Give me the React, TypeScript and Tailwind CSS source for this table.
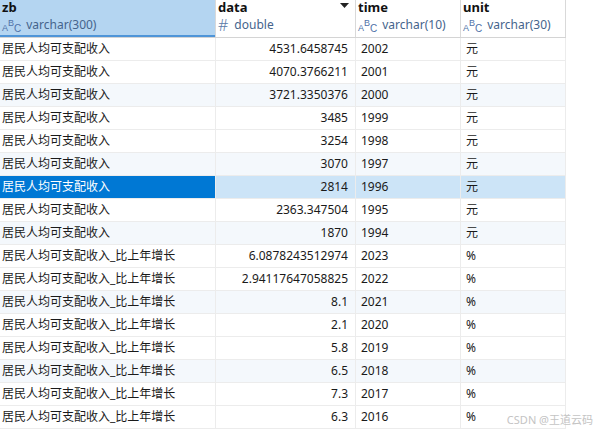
import { Fragment } from "react"

const rows: [string, string, string, string][] = [
  ["居民人均可支配收入", "4531.6458745", "2002", "元"],
  ["居民人均可支配收入", "4070.3766211", "2001", "元"],
  ["居民人均可支配收入", "3721.3350376", "2000", "元"],
  ["居民人均可支配收入", "3485", "1999", "元"],
  ["居民人均可支配收入", "3254", "1998", "元"],
  ["居民人均可支配收入", "3070", "1997", "元"],
  ["居民人均可支配收入", "2814", "1996", "元"],
  ["居民人均可支配收入", "2363.347504", "1995", "元"],
  ["居民人均可支配收入", "1870", "1994", "元"],
  ["居民人均可支配收入_比上年增长", "6.0878243512974", "2023", "%"],
  ["居民人均可支配收入_比上年增长", "2.94117647058825", "2022", "%"],
  ["居民人均可支配收入_比上年增长", "8.1", "2021", "%"],
  ["居民人均可支配收入_比上年增长", "2.1", "2020", "%"],
  ["居民人均可支配收入_比上年增长", "5.8", "2019", "%"],
  ["居民人均可支配收入_比上年增长", "6.5", "2018", "%"],
  ["居民人均可支配收入_比上年增长", "7.3", "2017", "%"],
  ["居民人均可支配收入_比上年增长", "6.3", "2016", "%"],
]

const font = { fontFamily: '"Noto Sans", "Noto Sans CJK SC", sans-serif' }

function AbcIcon() {
  return (
    <span className="inline-flex items-end mr-[5px] h-[14px] text-[#4f72a8] leading-none" style={{ fontFamily: '"Liberation Sans", sans-serif' }}>
      <span className="text-[9px] translate-y-[1px]">A</span>
      <span className="text-[9px] -translate-y-[4px]">B</span>
      <span className="text-[10px] translate-y-[2px]">C</span>
    </span>
  )
}

function Header({ name, type, icon, active, sort }: { name: string; type: string; icon: "abc" | "num"; active?: boolean; sort?: boolean }) {
  return (
    <div className={`relative h-[37px] border-r border-[#d9d9d9] ${active ? "bg-[#b4d5f1]" : "bg-white"}`}>
      <div className="px-[2px] text-[13px] font-bold text-[#111] leading-[15px]">{name}</div>
      <div className="flex items-center px-[2px] mt-[2px] h-[16px] text-[12px] text-[#45648c] leading-[16px]">
        {icon === "abc" ? <AbcIcon /> : <span className="mr-[6px] h-[14px] text-[16px] font-light leading-[14px] text-[#5a7ba8]">#</span>}
        <span>{type}</span>
      </div>
      {sort && (
        <svg className="absolute right-[6px] top-[3px]" width="9" height="6" viewBox="0 0 9 6">
          <path d="M0 0h9L4.5 5z" fill="#222" />
        </svg>
      )}
      {active && <div className="absolute left-0 right-0 bottom-0 h-[2px] bg-[#4f95d8]" />}
    </div>
  )
}

export default function App() {
  return (
    <div className="relative w-[596px] h-[430px] bg-white overflow-hidden" style={font}>
      <div className="grid grid-cols-[216px_140px_105px_105px] w-[566px]">
        <Header name="zb" type="varchar(300)" icon="abc" active />
        <Header name="data" type="double" icon="num" sort />
        <Header name="time" type="varchar(10)" icon="abc" />
        <Header name="unit" type="varchar(30)" icon="abc" />
        <div className="col-span-4 h-px bg-[#d4d4d4]" />
        {rows.map((r, i) => {
          const selected = i === 6
          const striped = (i + 1) % 3 === 0
          const bg = selected ? "bg-[#cce4f7]" : striped ? "bg-[#f4f8fc]" : "bg-white"
          const cell = `h-[23px] border-b border-r border-[#ececec] text-[12px] leading-[22px] text-[#1a1a1a] whitespace-nowrap overflow-hidden ${bg}`
          return (
            <Fragment key={i}>
              <div className={`${cell} px-[2px] ${selected ? "!bg-[#0078d4] text-white" : ""}`}>{r[0]}</div>
              <div className={`${cell} pr-[7px] text-right`}>{r[1]}</div>
              <div className={`${cell} pl-[5px]`}>{r[2]}</div>
              <div className={`${cell} pl-[5px]`}>{r[3]}</div>
            </Fragment>
          )
        })}
      </div>
      <div className="absolute right-[3px] bottom-[5px] text-[11px] text-[#c4c4c4] leading-none">CSDN @王道云码</div>
    </div>
  )
}
